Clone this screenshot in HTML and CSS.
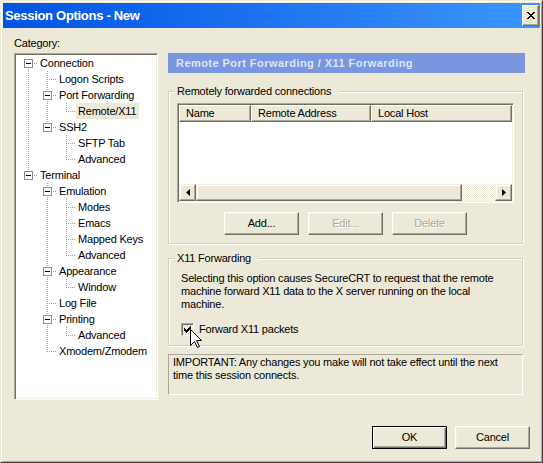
FILE: index.html
```html
<!DOCTYPE html>
<html lang="en">
<head>
<meta charset="utf-8">
<title>Session Options - New</title>
<link rel="stylesheet" href="styles.css">
</head>
<body>
<div class="window">
  <div class="frame">
    <div class="titlebar">
      <span class="title">Session Options - New</span>
      <button class="close" aria-label="Close">
        <svg width="8" height="7" viewBox="0 0 8 7"><path fill="#000" d="M0 0h2v1h-2z M6 0h2v1h-2z M1 1h2v1h-2z M5 1h2v1h-2z M2 2h4v1h-4z M3 3h2v1h-2z M2 4h4v1h-4z M1 5h2v1h-2z M5 5h2v1h-2z M0 6h2v1h-2z M6 6h2v1h-2z"/></svg>
      </button>
    </div>

    <div class="client">
      <div class="main">
        <div class="cat-label">Category:</div>

        <div class="tree">
          <div class="node"><span class="g fd"><i class="box"></i></span><span class="text">Connection</span></div>
          <div class="node"><span class="g v"></span><span class="g t"></span><span class="text">Logon Scripts</span></div>
          <div class="node"><span class="g v"></span><span class="g t"><i class="box"></i></span><span class="text">Port Forwarding</span></div>
          <div class="node"><span class="g v"></span><span class="g v"></span><span class="g l"></span><span class="text selected">Remote/X11</span></div>
          <div class="node"><span class="g v"></span><span class="g l"><i class="box"></i></span><span class="text">SSH2</span></div>
          <div class="node"><span class="g v"></span><span class="g"></span><span class="g t"></span><span class="text">SFTP Tab</span></div>
          <div class="node"><span class="g v"></span><span class="g"></span><span class="g l"></span><span class="text">Advanced</span></div>
          <div class="node"><span class="g l"><i class="box"></i></span><span class="text">Terminal</span></div>
          <div class="node"><span class="g"></span><span class="g t"><i class="box"></i></span><span class="text">Emulation</span></div>
          <div class="node"><span class="g"></span><span class="g v"></span><span class="g t"></span><span class="text">Modes</span></div>
          <div class="node"><span class="g"></span><span class="g v"></span><span class="g t"></span><span class="text">Emacs</span></div>
          <div class="node"><span class="g"></span><span class="g v"></span><span class="g t"></span><span class="text">Mapped Keys</span></div>
          <div class="node"><span class="g"></span><span class="g v"></span><span class="g l"></span><span class="text">Advanced</span></div>
          <div class="node"><span class="g"></span><span class="g t"><i class="box"></i></span><span class="text">Appearance</span></div>
          <div class="node"><span class="g"></span><span class="g v"></span><span class="g l"></span><span class="text">Window</span></div>
          <div class="node"><span class="g"></span><span class="g t"></span><span class="text">Log File</span></div>
          <div class="node"><span class="g"></span><span class="g t"><i class="box"></i></span><span class="text">Printing</span></div>
          <div class="node"><span class="g"></span><span class="g v"></span><span class="g l"></span><span class="text">Advanced</span></div>
          <div class="node"><span class="g"></span><span class="g l"></span><span class="text">Xmodem/Zmodem</span></div>
        </div>

        <div class="page">
          <div class="page-head">Remote Port Forwarding / X11 Forwarding</div>

          <fieldset class="group remote">
            <legend>Remotely forwarded connections</legend>
            <div class="listview">
              <div class="lv-header">
                <div class="col c-name">Name</div>
                <div class="col c-addr">Remote Address</div>
                <div class="col c-host">Local Host</div>
              </div>
              <div class="lv-body"></div>
              <div class="hscroll">
                <div class="sb-btn"><svg width="4" height="7" viewBox="0 0 4 7"><path fill="#000" d="M4 0v7L0 3.5z"/></svg></div>
                <div class="sb-thumb"></div>
                <div class="sb-track"></div>
                <div class="sb-btn"><svg width="4" height="7" viewBox="0 0 4 7"><path fill="#000" d="M0 0v7l4-3.5z"/></svg></div>
              </div>
            </div>
            <div class="btn-row">
              <button class="btn">Add...</button>
              <button class="btn" disabled>Edit...</button>
              <button class="btn" disabled>Delete</button>
            </div>
          </fieldset>

          <fieldset class="group x11">
            <legend>X11 Forwarding</legend>
            <div class="x11-body">
              <p>Selecting this option causes SecureCRT to request that the remote machine forward X11 data to the X server running on the local machine.</p>
              <label class="check">
                <span class="checkbox"><svg width="7" height="7" viewBox="0 0 7 7"><path fill="#000" d="M6 0h1v1h-1z M5 1h2v1h-2z M0 2h1v1h-1z M4 2h3v1h-3z M0 3h2v1h-2z M3 3h3v1h-3z M0 4h5v1h-5z M1 5h3v1h-3z M2 6h1v1h-1z"/></svg></span>
                <span>Forward X11 packets</span>
              </label>
            </div>
          </fieldset>

          <div class="notice">IMPORTANT: Any changes you make will not take effect until the next time this session connects.</div>
        </div>
      </div>

      <div class="footer">
        <button class="btn default">OK</button>
        <button class="btn">Cancel</button>
      </div>
    </div>
  </div>

  <svg class="pointer" width="13" height="20" viewBox="0 0 13 20"><path fill="#fff" stroke="#000" stroke-width="1" d="M0.5 0.5V16.5L4.5 12.5L7.5 18.5L9.5 17.5L6.5 11.5H11.5Z"/></svg>
</div>
</body>
</html>
```

FILE: styles.css
```css
* { box-sizing: border-box; }

html, body { margin: 0; padding: 0; }

body {
  width: 543px;
  height: 463px;
  overflow: hidden;
  background: #ECE9D8;
  color: #000;
  font-family: "Liberation Sans", Arial, sans-serif;
  font-size: 11px;
  line-height: 13px;
  letter-spacing: -0.2px;
}

/* ---- window frame ---- */
.window {
  position: relative;
  width: 543px;
  height: 463px;
  display: flex;
  flex-direction: column;
  background: #ECE9D8;
  border: 1px solid;
  border-color: #ECE9D8 #404040 #404040 #ECE9D8;
}

.frame {
  flex: 1;
  display: flex;
  flex-direction: column;
  border: 1px solid;
  border-color: #fff #ACA899 #ACA899 #fff;
  padding: 1px;
}

.titlebar {
  flex: none;
  height: 25px;
  display: flex;
  align-items: center;
  justify-content: space-between;
  padding: 0 1px 0 2px;
  background: linear-gradient(90deg, #0054E3 0%, #1C70F0 45%, #3D95FF 100%);
}

.title {
  color: #fff;
  font-weight: bold;
  font-size: 13px;
  letter-spacing: -0.3px;
}

.close {
  width: 17px;
  height: 21px;
  padding: 0;
  display: flex;
  align-items: center;
  justify-content: center;
  background: #ECE9D8;
  border: 1px solid;
  border-color: #fff #716F64 #716F64 #fff;
  box-shadow: inset -1px -1px #ACA899, inset 1px 1px #F1EFE2;
}

/* ---- client area ---- */
.client {
  flex: 1;
  display: flex;
  flex-direction: column;
  padding: 9px 10px 0 11px;
}

.main {
  display: grid;
  grid-template-columns: 144px 357px;
  grid-template-rows: 13px 347px;
  column-gap: 10px;
  row-gap: 3px;
}

.cat-label { grid-column: 1; grid-row: 1; }

/* ---- category tree ---- */
.tree {
  --vd: repeating-linear-gradient(to bottom, #A0A0A0 0 1px, transparent 1px 2px);
  --hd: repeating-linear-gradient(to right, #A0A0A0 0 1px, transparent 1px 2px);
  grid-column: 1;
  grid-row: 2;
  background: #fff;
  border: 1px solid;
  border-color: #ACA899 #fff #fff #ACA899;
  box-shadow: inset 1px 1px #716F64, inset -1px -1px #F1EFE2;
  padding: 1px 0 0 4px;
}

.node {
  display: flex;
  height: 16px;
}

.g {
  flex: none;
  width: 19px;
  height: 16px;
  display: flex;
  align-items: flex-start;
}

.g.v { background: var(--vd) 9px 0 / 1px 16px no-repeat; }
.g.t { background: var(--vd) 9px 0 / 1px 16px no-repeat, var(--hd) 11px 8px / 8px 1px no-repeat; }
.g.l { background: var(--vd) 9px 0 / 1px 9px no-repeat, var(--hd) 11px 8px / 8px 1px no-repeat; }
.g.fd { background: var(--vd) 9px 8px / 1px 8px no-repeat, var(--hd) 11px 8px / 8px 1px no-repeat; }

.box {
  width: 9px;
  height: 9px;
  margin: 4px 0 0 5px;
  display: flex;
  align-items: center;
  justify-content: center;
  background: #fff;
  border: 1px solid #8C8C8C;
}

.box::before {
  content: "";
  width: 5px;
  height: 1px;
  background: #000;
}

.text {
  padding: 0 3px 0 2px;
  line-height: 16px;
  white-space: nowrap;
}

.text.selected { background: #ECE9D8; }

/* ---- right-hand page ---- */
.page {
  grid-column: 2;
  grid-row: 2;
  display: flex;
  flex-direction: column;
}

.page-head {
  height: 20px;
  line-height: 20px;
  padding-left: 8px;
  background: #7A96DF;
  color: #DCE4F8;
  font-weight: bold;
  letter-spacing: 0.45px;
  white-space: nowrap;
}

.group {
  min-width: 0;
  margin: 12px 2px 0 0;
  border: 1px solid #D0D0BF;
  box-shadow: 1px 1px 0 #fff, inset 1px 1px 0 #fff;
}

.group legend {
  margin-left: 5px;
  padding: 0 8px 0 3px;
  background: #ECE9D8;
}

.remote { padding: 5px 0 8px; }
.x11 { margin-top: 8px; padding: 7px 0 9px; }

.listview {
  height: 100px;
  margin: 0 8px;
  display: flex;
  flex-direction: column;
  background: #fff;
  border: 1px solid;
  border-color: #ACA899 #fff #fff #ACA899;
  box-shadow: inset 1px 1px #716F64, inset -1px -1px #F1EFE2;
  padding: 1px;
}

.lv-header {
  flex: none;
  display: flex;
  height: 17px;
}

.col {
  height: 17px;
  padding-left: 6px;
  line-height: 15px;
  white-space: nowrap;
  background: #ECE9D8;
  border: 1px solid;
  border-color: #fff #716F64 #716F64 #fff;
  box-shadow: inset -1px -1px #ACA899;
}

.c-name { flex: none; width: 72px; }
.c-addr { flex: none; width: 120px; }
.c-host { flex: 1; }

.lv-body { flex: 1; }

.hscroll {
  flex: none;
  display: flex;
  height: 17px;
}

.sb-btn,
.sb-thumb {
  background: #ECE9D8;
  border: 1px solid;
  border-color: #F1EFE2 #716F64 #716F64 #F1EFE2;
  box-shadow: inset -1px -1px #ACA899, inset 1px 1px #fff;
}

.sb-btn {
  flex: none;
  width: 17px;
  display: flex;
  align-items: center;
  justify-content: center;
}

.sb-thumb { flex: none; width: 266px; }

.sb-track {
  flex: 1;
  background: repeating-conic-gradient(#fff 0 25%, #ECE9D8 0 50%) 0 0 / 2px 2px;
}

.btn-row {
  display: flex;
  justify-content: center;
  gap: 9px;
  margin-top: 9px;
}

.btn {
  width: 75px;
  height: 23px;
  padding: 0;
  font: inherit;
  letter-spacing: inherit;
  color: #000;
  background: #ECE9D8;
  border: 1px solid;
  border-color: #fff #716F64 #716F64 #fff;
  box-shadow: inset -1px -1px #ACA899, inset 1px 1px #F1EFE2;
}

.btn:disabled {
  color: #ACA899;
  text-shadow: 1px 1px 0 #fff;
}

.btn.default {
  border-color: #000;
  box-shadow: inset 1px 1px #fff, inset -1px -1px #716F64, inset -2px -2px #ACA899;
}

.x11-body { padding: 0 12px; }

.x11-body p { margin: 0; }

.check {
  display: flex;
  align-items: center;
  gap: 5px;
  margin-top: 12px;
  height: 13px;
}

.checkbox {
  flex: none;
  width: 13px;
  height: 13px;
  display: flex;
  align-items: center;
  justify-content: center;
  background: #ECE9D8;
  border: 1px solid;
  border-color: #ACA899 #fff #fff #ACA899;
  box-shadow: inset 1px 1px #716F64, inset -1px -1px #F1EFE2;
}

.notice {
  height: 41px;
  margin: 8px 2px 0 0;
  padding: 1px 4px;
  border: 1px solid;
  border-color: #ACA899 #fff #fff #ACA899;
}

/* ---- dialog buttons ---- */
.footer {
  display: flex;
  justify-content: flex-end;
  gap: 8px;
  margin-top: 26px;
}

/* mouse pointer resting on the checkbox */
.pointer {
  position: absolute;
  left: 189px;
  top: 328px;
}
```
